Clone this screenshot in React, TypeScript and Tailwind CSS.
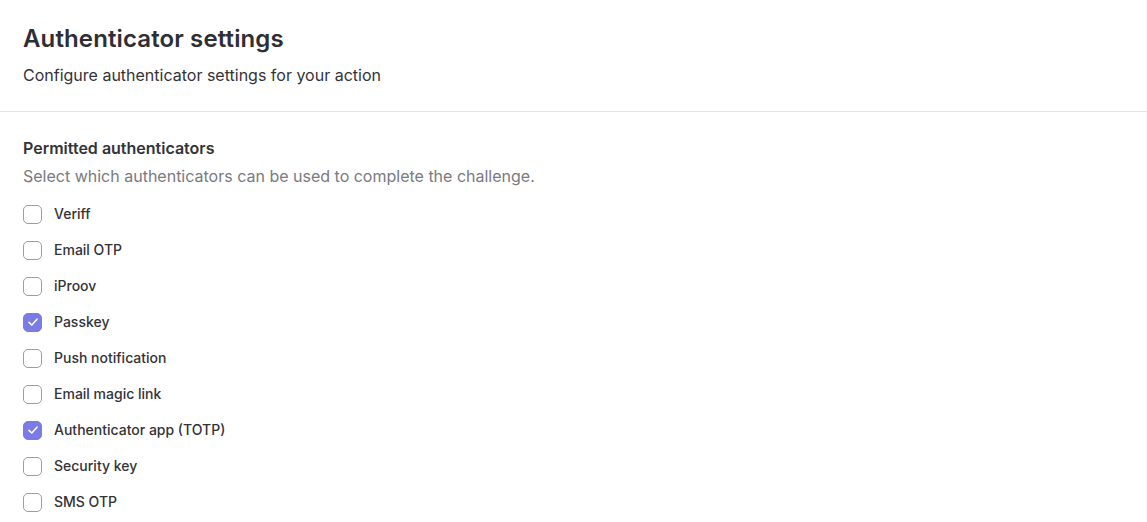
import { useState } from 'react';

const authenticators = [
  'Veriff',
  'Email OTP',
  'iProov',
  'Passkey',
  'Push notification',
  'Email magic link',
  'Authenticator app (TOTP)',
  'Security key',
  'SMS OTP',
];

const App = () => {
  const [selected, setSelected] = useState<string[]>(['Passkey', 'Authenticator app (TOTP)']);

  const toggle = (name: string) => {
    setSelected(selected.includes(name) ? selected.filter((s) => s !== name) : [...selected, name]);
  };

  return (
    <div className="min-h-screen bg-white font-['Inter',sans-serif]">
      {/* Header */}
      <div className="px-[23px] pt-[24px] pb-[24px] border-b border-[#e5e5e5]">
        <h1 className="text-[24px] leading-[30px] font-semibold text-[#2e2e34] tracking-[0.005em]">Authenticator settings</h1>
        <p className="mt-[9px] text-[16px] leading-[24px] text-[#333338]">
          Configure authenticator settings for your action
        </p>
      </div>

      {/* Permitted authenticators */}
      <div className="px-[23px] pt-[25px]">
        <h2 className="text-[16px] leading-[22px] font-semibold text-[#333338]">Permitted authenticators</h2>
        <p className="mt-[6px] text-[16px] leading-[22px] text-[#7a7a80]">
          Select which authenticators can be used to complete the challenge.
        </p>
        <div className="mt-[9px] flex flex-col">
          {authenticators.map((name) => {
            const checked = selected.includes(name);
            return (
              <label key={name} className="flex items-center h-[36px] gap-[12px] cursor-pointer">
                <button
                  type="button"
                  onClick={() => toggle(name)}
                  className={`w-[19px] h-[19px] rounded-[5px] flex items-center justify-center shrink-0 ${
                    checked ? 'bg-[#7b7be8] border border-[#7b7be8]' : 'bg-white border border-[#9d9ca8]'
                  }`}
                >
                  {checked && (
                    <svg width="12" height="12" viewBox="0 0 12 12" fill="none">
                      <path d="M2 6.3L4.8 9L10 3.2" stroke="white" strokeWidth="1.6" strokeLinecap="round" strokeLinejoin="round" />
                    </svg>
                  )}
                </button>
                <span className="text-[14px] leading-[20px] font-medium text-[#333338]">{name}</span>
              </label>
            );
          })}
        </div>
      </div>
    </div>
  );
};

export default App;
